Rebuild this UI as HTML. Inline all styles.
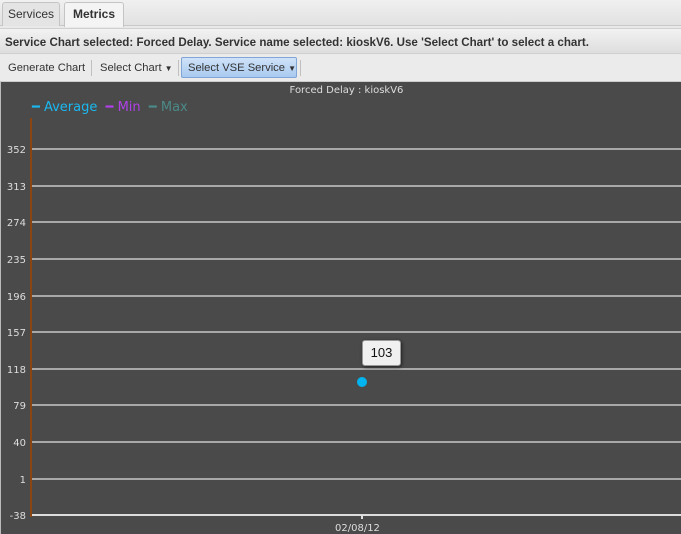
<!DOCTYPE html>
<html><head><style>
*{margin:0;padding:0;box-sizing:border-box}
body{width:681px;height:534px;overflow:hidden;background:#e9e9e9;font-family:"Liberation Sans",sans-serif;position:relative}
.tabs{position:absolute;left:0;top:0;width:681px;height:26px;background:linear-gradient(#f0f0f0,#e2e2e2);border-bottom:1px solid #c8c8c8}
.tab{position:absolute;top:2px;height:24px;border:1px solid #c4c4c4;border-bottom:none;border-radius:3px 3px 0 0;font-size:12px;line-height:22px;text-align:center;color:#333}
.status{position:absolute;left:0;top:28px;width:681px;height:26px;background:linear-gradient(#f2f2f2,#dedede);border-top:1px solid #d0d0d0;border-bottom:1px solid #d0d0d0;font-weight:bold;font-size:11.6px;line-height:27px;padding-left:5px;color:#333}
.tb{position:absolute;left:0;top:55px;width:681px;height:26px;background:#ebebeb;font-size:11.2px;color:#333}
.tb span{position:absolute;top:0;line-height:26px}
.sep{position:absolute;top:5px;width:1px;height:16px;background:#c0c0c0}
.chart{position:absolute;left:0;top:81px;width:681px;height:453px;background:#4a4a4a;border-left:1px solid #bbb;border-top:1px solid #ccc}
.g{position:absolute;left:31px;width:650px;height:2px;background:#a8a8a8}
.l{position:absolute;left:0;width:25px;text-align:right;font-family:"DejaVu Sans",sans-serif;font-size:10px;color:#ddd}
</style></head><body>
<div class="tabs">
<div class="tab" style="left:2px;width:58px;background:#e4e4e4">Services</div>
<div class="tab" style="left:64px;width:60px;background:#f4f4f4;font-weight:bold;height:25px">Metrics</div>
</div>
<div class="status">Service Chart selected: Forced Delay. Service name selected: kioskV6. Use 'Select Chart' to select a chart.</div>
<div class="tb">
<span style="left:8px">Generate Chart</span>
<div class="sep" style="left:91px"></div>
<span style="left:100px">Select Chart <span style="position:static;font-size:8px">▼</span></span>
<div class="sep" style="left:178px"></div>
<div style="position:absolute;left:181px;top:2px;width:116px;height:21px;background:linear-gradient(#cfe2f8,#a9c9ef);border:1px solid #7fa6d6;border-radius:2px"></div>
<span style="left:188px">Select VSE Service <span style="position:static;font-size:8px">▼</span></span>
<div class="sep" style="left:300px"></div>
</div>
<div class="chart">
<div style="position:absolute;left:0;width:681px;top:3px;text-align:center;font-family:'DejaVu Sans',sans-serif;font-size:10px;color:#ddd;padding-left:10px">Forced Delay : kioskV6</div>
<div style="position:absolute;left:31px;top:18px;font-family:'DejaVu Sans',sans-serif;font-size:13px">
<span style="color:#1ab8f0">━ Average</span>&nbsp; <span style="color:#b040e8">━ Min</span>&nbsp; <span style="color:#4a8a88">━ Max</span></div>
<div style="position:absolute;left:29px;top:36px;width:2px;height:399px;background:#8b4513"></div>
<div class="g" style="top:66px"></div><div class="l" style="top:63px">352</div>
<div class="g" style="top:103px"></div><div class="l" style="top:100px">313</div>
<div class="g" style="top:139px"></div><div class="l" style="top:136px">274</div>
<div class="g" style="top:176px"></div><div class="l" style="top:173px">235</div>
<div class="g" style="top:213px"></div><div class="l" style="top:210px">196</div>
<div class="g" style="top:249px"></div><div class="l" style="top:246px">157</div>
<div class="g" style="top:286px"></div><div class="l" style="top:283px">118</div>
<div class="g" style="top:322px"></div><div class="l" style="top:319px">79</div>
<div class="g" style="top:359px"></div><div class="l" style="top:356px">40</div>
<div class="g" style="top:396px"></div><div class="l" style="top:393px">1</div>
<div class="g" style="top:432px;background:#ddd"></div><div class="l" style="top:429px">-38</div>
<div style="position:absolute;left:360px;top:434px;width:2px;height:3px;background:#ddd"></div>
<div style="position:absolute;left:334px;top:441px;font-family:'DejaVu Sans',sans-serif;font-size:10px;color:#ddd">02/08/12</div>
<div style="position:absolute;left:356px;top:295px;width:10px;height:10px;border-radius:50%;background:#00b4f0"></div>
<div style="position:absolute;left:361px;top:258px;width:39px;height:26px;background:#f0f0f0;border:1px solid #999;border-radius:3px;box-shadow:1px 1px 3px #222;font-size:13px;line-height:24px;text-align:center;color:#111">103</div>
</div>
</body></html>
